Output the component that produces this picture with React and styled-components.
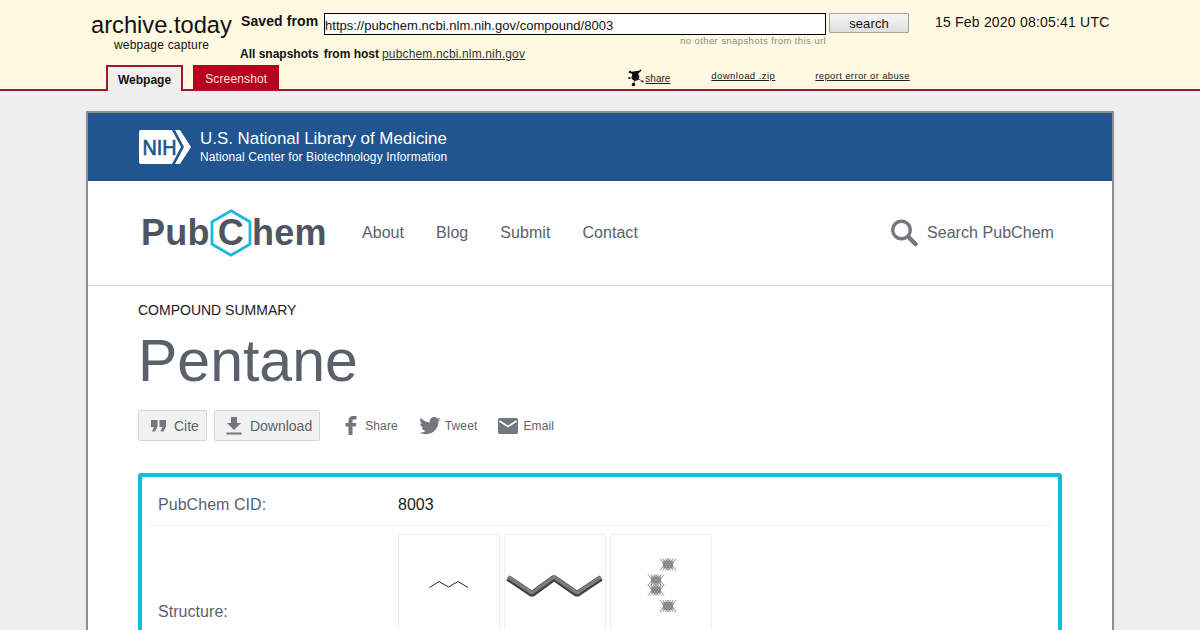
import styled, { createGlobalStyle } from 'styled-components'

const GlobalStyle = createGlobalStyle`
    html, body {
        margin: 0;
        height: 630px;
        overflow: hidden;
        background: #eeeeee;
        font-family: "Liberation Sans", Arial, sans-serif;
    }
`

const CRIMSON = '#a5152f'
const SLATE = '#5b616b'
const ICON = '#737780'

const NihLogo = () => (
    <svg width="53" height="34" viewBox="0 0 53 34">
        <path d="M2 0H33L42 17L33 34H2Q0 34 0 32V2Q0 0 2 0Z" fill="#fff" />
        <path d="M36 0H41L52 17L41 34H36L45 17Z" fill="#fff" />
        <text x="3.5" y="25" fontFamily="Liberation Sans" fontSize="22" fill="#20558a" stroke="#20558a" strokeWidth="0.7" textLength="34" lengthAdjust="spacingAndGlyphs">NIH</text>
    </svg>
)

const Hexagon = () => (
    <svg width="42" height="48" viewBox="0 0 42 48">
        <path d="M21 1.8L40 12.8V35.2L21 46.2L2 35.2V12.8Z" fill="none" stroke="#1bb8de" strokeWidth="2.8" />
    </svg>
)

const SearchIcon = () => (
    <svg width="28" height="28" viewBox="0 0 28 28">
        <circle cx="11.5" cy="11" r="8.8" fill="none" stroke={ICON} strokeWidth="3.4" />
        <path d="M18 17.5L25.5 25" stroke={ICON} strokeWidth="4.4" strokeLinecap="round" />
    </svg>
)

const ShareBlob = () => (
    <svg width="16" height="18" viewBox="0 0 16 18">
        <circle cx="7.5" cy="8" r="3.8" fill="#111" />
        <circle cx="2" cy="3" r="1.3" fill="#111" />
        <circle cx="12.5" cy="1.5" r="0.9" fill="#111" />
        <circle cx="1.2" cy="9" r="1" fill="#111" />
        <circle cx="14.5" cy="12.5" r="1.1" fill="#111" />
        <circle cx="5.5" cy="15.5" r="1.8" fill="#111" />
        <path d="M2 3L7.5 8L12.5 1.5M1.2 9H7M7.5 8L14.5 12.5M7.5 8L5.5 15" stroke="#111" strokeWidth="0.7" />
    </svg>
)

const QuoteIcon = () => (
    <svg width="15" height="12" viewBox="0 0 15 12">
        <path d="M0 0H6.5V6.5L4 11.5H1L3 7H0ZM8.5 0H15V6.5L12.5 11.5H9.5L11.5 7H8.5Z" fill={ICON} />
    </svg>
)

const DownloadIcon = () => (
    <svg width="16" height="18" viewBox="0 0 16 18">
        <path d="M5 0H11V6H15L8 13L1 6H5ZM0.5 15.5H15.5V17.5H0.5Z" fill={ICON} />
    </svg>
)

const FacebookIcon = () => (
    <svg width="12" height="19" viewBox="0 0 12 19">
        <path d="M3.5 19V10.5H0.5V7H3.5V4.5C3.5 1.5 5.3 0 8 0H11.5V3.4H9.2C8 3.4 7.5 3.9 7.5 5V7H11.3L10.8 10.5H7.5V19Z" fill={ICON} />
    </svg>
)

const TwitterIcon = () => (
    <svg width="22" height="18" viewBox="0 0 24 20">
        <path d="M24 2.4c-.9.4-1.8.7-2.8.8 1-.6 1.8-1.6 2.2-2.7-1 .6-2 1-3.1 1.2C19.3.7 18 0 16.6 0c-2.7 0-4.9 2.2-4.9 4.9 0 .4 0 .8.1 1.1C7.7 5.8 4.1 3.9 1.7.9c-.4.7-.7 1.6-.7 2.5 0 1.7.9 3.2 2.2 4.1-.8 0-1.6-.2-2.2-.6v.1c0 2.4 1.7 4.4 3.9 4.8-.4.1-.8.2-1.3.2-.3 0-.6 0-.9-.1.6 2 2.4 3.4 4.6 3.4-1.7 1.3-3.8 2.1-6.1 2.1-.4 0-.8 0-1.2-.1C2.2 18.3 4.8 19.1 7.5 19.1c9.1 0 14-7.5 14-14v-.6c1-.7 1.8-1.5 2.5-2.1z" fill={ICON} />
    </svg>
)

const MailIcon = () => (
    <svg width="20" height="16" viewBox="0 0 20 16">
        <path d="M2 0H18Q20 0 20 2V14Q20 16 18 16H2Q0 16 0 14V2Q0 0 2 0Z" fill={ICON} />
        <path d="M1.5 3L10 8.5L18.5 3" fill="none" stroke="#fff" strokeWidth="1.8" />
    </svg>
)

const Skeletal = () => (
    <svg width="40" height="10" viewBox="0 0 40 10">
        <polyline points="0.5,8.5 10,2.5 19.5,8 29,2.5 39,8.5" fill="none" stroke="#222" strokeWidth="1" />
    </svg>
)

const Sticks = () => (
    <svg width="98" height="24" viewBox="0 0 98 24">
        <polyline points="2,4 26,20 48,4 71,20 95,4" fill="none" stroke="#3f3f3f" strokeWidth="6" strokeLinejoin="bevel" />
        <polyline points="2,3 26,19 48,3 71,19 95,3" fill="none" stroke="#7d7d7d" strokeWidth="3.4" strokeLinejoin="bevel" />
    </svg>
)

const Crystal = () => (
    <svg width="36" height="58" viewBox="0 0 36 58">
        <defs>
            <filter id="soften"><feGaussianBlur stdDeviation="0.55" /></filter>
        </defs>
        <g filter="url(#soften)" stroke="#6a6a6a" strokeWidth="0.7">
            {[[25, 6.5, 18, 12], [13, 22, 18, 11], [13, 32, 18, 11], [25, 48, 18, 12]].map(([cx, cy, w, h]) => (
                <g key={`${cx}-${cy}`}>
                    <rect x={cx - 5} y={cy - h / 2 + 2} width={10} height={h - 4} fill="#a8a8a8" stroke="none" />
                    {[-4, -1.3, 1.3, 4].map(k => (
                        <g key={k}>
                            <path d={`M${cx + k - 4} ${cy - h / 2}L${cx + k + 4} ${cy + h / 2}`} />
                            <path d={`M${cx + k + 4} ${cy - h / 2}L${cx + k - 4} ${cy + h / 2}`} />
                        </g>
                    ))}
                </g>
            ))}
        </g>
    </svg>
)

export default function App() {
    const nav = ['About', 'Blog', 'Submit', 'Contact']

    return (
        <>
            <GlobalStyle />
            <ArchiveBar>
                <TopRow>
                    <Brand>
                        <BrandName>archive.today</BrandName>
                        <BrandSub>webpage capture</BrandSub>
                    </Brand>
                    <Middle>
                        <SearchRow>
                            <SavedFrom>Saved from</SavedFrom>
                            <UrlInput readOnly value="https://pubchem.ncbi.nlm.nih.gov/compound/8003" />
                            <SearchButton>search</SearchButton>
                        </SearchRow>
                        <NoSnapshots>no other snapshots from this url</NoSnapshots>
                        <Snapshots>
                            <b>All snapshots</b>
                            <b>from host</b>
                            <BarLink>pubchem.ncbi.nlm.nih.gov</BarLink>
                        </Snapshots>
                    </Middle>
                    <DateStamp>15 Feb 2020 08:05:41 UTC</DateStamp>
                </TopRow>
                <TabRow>
                    <Tab $active>Webpage</Tab>
                    <Tab>Screenshot</Tab>
                    <BarActions>
                        <ShareAction><ShareBlob /><TinyLink>share</TinyLink></ShareAction>
                        <ZipLink>download .zip</ZipLink>
                        <ReportLink>report error or abuse</ReportLink>
                    </BarActions>
                </TabRow>
            </ArchiveBar>

            <Frame>
                <NihBanner>
                    <NihLogo />
                    <NihText>
                        <NihTitle>U.S. National Library of Medicine</NihTitle>
                        <NihSub>National Center for Biotechnology Information</NihSub>
                    </NihText>
                </NihBanner>

                <MainNav>
                    <Logo>
                        Pub
                        <LogoC>C<HexWrap><Hexagon /></HexWrap></LogoC>
                        hem
                    </Logo>
                    <NavLinks>
                        {nav.map(item => <NavLink key={item}>{item}</NavLink>)}
                    </NavLinks>
                    <SearchLink><SearchIcon />Search PubChem</SearchLink>
                </MainNav>

                <Content>
                    <Eyebrow>COMPOUND SUMMARY</Eyebrow>
                    <Title>Pentane</Title>
                    <Actions>
                        <ActionButton $left={12}><QuoteIcon />Cite</ActionButton>
                        <ActionButton $left={11}><DownloadIcon />Download</ActionButton>
                        <Socials>
                            <Social $gap={8} $left={1}><FacebookIcon />Share</Social>
                            <Social $gap={4} $left={1}><TwitterIcon />Tweet</Social>
                            <Social $gap={5} $left={1}><MailIcon />Email</Social>
                        </Socials>
                    </Actions>

                    <SummaryCard>
                        <CidRow>
                            <FieldLabel>PubChem CID:</FieldLabel>
                            <FieldValue>8003</FieldValue>
                        </CidRow>
                        <StructureRow>
                            <StructureLabel>Structure:</StructureLabel>
                            <Thumbs>
                                <Thumb $pad={44}><Skeletal /></Thumb>
                                <Thumb $pad={39}><Sticks /></Thumb>
                                <Thumb $pad={23}><Crystal /></Thumb>
                            </Thumbs>
                        </StructureRow>
                    </SummaryCard>
                </Content>
            </Frame>
        </>
    )
}

const ArchiveBar = styled.header`
    height: 89px;
    background: #fff9e2;
    border-bottom: 2px solid ${CRIMSON};
    color: #111;
    display: flex;
    flex-direction: column;
    justify-content: space-between;
`

const TopRow = styled.div`
    display: flex;
    padding: 11px 0 0 91px;
`

const Brand = styled.div`
    width: 149px;
    margin-top: 1px;
`

const BrandName = styled.div`
    font-size: 23.7px;
    line-height: 26px;
`

const BrandSub = styled.div`
    font-size: 12px;
    letter-spacing: 0.2px;
    line-height: 14px;
    padding-left: 23px;
`

const Middle = styled.div`
    width: 669px;
    position: relative;
`

const SearchRow = styled.div`
    display: flex;
    align-items: flex-start;
    padding: 2px 0 0 1px;
`

const SavedFrom = styled.span`
    font-size: 14px;
    font-weight: bold;
    letter-spacing: 0.1px;
    line-height: 16px;
    width: 83px;
`

const UrlInput = styled.input`
    box-sizing: border-box;
    width: 502px;
    height: 22px;
    padding: 2px 0 0 0;
    border: 1px solid #000;
    background: #fff;
    font: 13px "Liberation Sans", Arial, sans-serif;
    letter-spacing: 0.03px;
    color: #111;
    outline: none;
`

const SearchButton = styled.button`
    box-sizing: border-box;
    width: 80px;
    height: 20px;
    margin-left: 3px;
    padding: 0;
    border: 1px solid #a3a3a3;
    border-radius: 1px;
    background: linear-gradient(#f6f6f6, #dedede);
    font: 13px "Liberation Sans", Arial, sans-serif;
    letter-spacing: 0.1px;
    color: #111;
`

const NoSnapshots = styled.div`
    width: 586px;
    text-align: right;
    font-size: 9.5px;
    letter-spacing: 0.4px;
    line-height: 11px;
    color: #8c8c86;
`

const Snapshots = styled.div`
    display: flex;
    gap: 5px;
    font-size: 12px;
    line-height: 14px;
    margin-top: 1px;
`

const BarLink = styled.span`
    text-decoration: underline;
    color: #333;
    margin-left: -2px;
    letter-spacing: 0.15px;
`

const DateStamp = styled.div`
    font-size: 14px;
    line-height: 16px;
    padding: 3px 0 0 26px;
    letter-spacing: 0.2px;
    white-space: nowrap;
`

const TabRow = styled.div`
    display: flex;
    align-items: flex-start;
    height: 24px;
    padding-left: 106px;
    gap: 10px;
`

const Tab = styled.div`
    box-sizing: border-box;
    height: ${p => (p.$active ? '26px' : '24px')};
    padding: ${p => (p.$active ? '6px 10px 0' : '7px 12px 0')};
    font-size: 12px;
    letter-spacing: ${p => (p.$active ? '0' : '0.15px')};
    line-height: 14px;
    font-weight: ${p => (p.$active ? 'bold' : 'normal')};
    color: ${p => (p.$active ? '#111' : '#fbe9d8')};
    background: ${p => (p.$active ? '#eeeeee' : '#b5001f')};
    border: ${p => (p.$active ? `2px solid ${CRIMSON}` : 'none')};
    border-bottom: none;
`

const BarActions = styled.div`
    display: flex;
    align-items: flex-start;
    margin-left: 339px;
    color: #222;
`

const ShareAction = styled.div`
    display: flex;
    align-items: flex-start;
    gap: 1px;
    margin-top: 4px;
    width: 83px;
`

const TinyLink = styled.span`
    font-size: 10px;
    line-height: 11px;
    text-decoration: underline;
    margin-top: 4px;
`

const ZipLink = styled(TinyLink)`
    margin-top: 5px;
    letter-spacing: 0.45px;
    font-size: 9.5px;
    width: 104px;
`

const ReportLink = styled(TinyLink)`
    margin-top: 5px;
    letter-spacing: 0.35px;
    font-size: 9.5px;
`

const Frame = styled.main`
    box-sizing: border-box;
    width: 1028px;
    margin: 20px 0 0 86px;
    background: #fff;
    border: 2px solid #8e8e8e;
    border-bottom: none;
`

const NihBanner = styled.div`
    height: 68px;
    background: #20558f;
    display: flex;
    align-items: center;
    gap: 8px;
    padding-left: 51px;
    color: #fff;
`

const NihText = styled.div`
    display: flex;
    flex-direction: column;
`

const NihTitle = styled.div`
    font-size: 16.9px;
    line-height: 20px;
`

const NihSub = styled.div`
    font-size: 12px;
    letter-spacing: 0.1px;
    line-height: 16px;
`

const MainNav = styled.nav`
    height: 104px;
    border-bottom: 1px solid #d2d3d6;
    display: flex;
    align-items: center;
    padding: 0 58px 0 53px;
`

const Logo = styled.div`
    display: flex;
    align-items: center;
    width: 221px;
    font-size: 36px;
    font-weight: bold;
    color: #4f5562;
    letter-spacing: 0.3px;
`

const LogoC = styled.span`
    position: relative;
    display: inline-block;
    width: 42px;
    text-align: center;
`

const HexWrap = styled.span`
    position: absolute;
    left: 0;
    top: -3px;
    width: 42px;
    height: 48px;
`

const NavLinks = styled.div`
    display: flex;
    gap: 32px;
    flex: 1;
`

const NavLink = styled.a`
    font-size: 16px;
    letter-spacing: 0.05px;
    color: ${SLATE};
`

const SearchLink = styled.div`
    display: flex;
    align-items: center;
    gap: 9px;
    font-size: 16px;
    letter-spacing: 0.05px;
    color: ${SLATE};
`

const Content = styled.section`
    padding: 16px 50px 0;
`

const Eyebrow = styled.div`
    font-size: 14px;
    line-height: 16px;
    color: #212121;
`

const Title = styled.h1`
    margin: 8px 0 0;
    font-size: 59px;
    line-height: 70px;
    font-weight: normal;
    color: ${SLATE};
`

const Actions = styled.div`
    display: flex;
    align-items: center;
    gap: 7px;
    margin-top: 14px;
`

const ActionButton = styled.div`
    box-sizing: border-box;
    height: 31px;
    display: flex;
    align-items: center;
    gap: 8px;
    padding: 0 7px 0 ${p => p.$left}px;
    border: 1px solid #d6d6d6;
    border-radius: 2px;
    background: #f1f1f1;
    font-size: 14px;
    color: ${SLATE};
`

const Socials = styled.div`
    display: flex;
    align-items: center;
    gap: 20px;
    margin-left: 17px;
`

const Social = styled.div`
    display: flex;
    align-items: center;
    gap: ${p => p.$gap}px;
    margin-left: ${p => p.$left}px;
    font-size: 12px;
    letter-spacing: 0.12px;
    color: ${SLATE};
`

const SummaryCard = styled.div`
    box-sizing: border-box;
    width: 924px;
    margin-top: 32px;
    padding: 0 8px;
    border: 4px solid #0bbfe2;
    border-radius: 3px;
`

const CidRow = styled.div`
    height: 49px;
    display: flex;
    align-items: center;
    padding-top: 8px;
    box-sizing: border-box;
    border-bottom: 1px solid #eeeeee;
`

const FieldLabel = styled.div`
    width: 248px;
    padding-left: 8px;
    box-sizing: border-box;
    font-size: 16px;
    letter-spacing: 0.05px;
    color: ${SLATE};
`

const FieldValue = styled.div`
    font-size: 16px;
    color: #212121;
`

const StructureRow = styled.div`
    display: flex;
    padding-top: 8px;
`

const StructureLabel = styled(FieldLabel)`
    padding-top: 69px;
    line-height: 18px;
`

const Thumbs = styled.div`
    display: flex;
    gap: 4px;
`

const Thumb = styled.div`
    box-sizing: border-box;
    width: 102px;
    height: 120px;
    border: 1px solid #eeeeee;
    border-radius: 2px;
    display: flex;
    justify-content: center;
    align-items: flex-start;
    padding-top: ${p => p.$pad}px;
`
